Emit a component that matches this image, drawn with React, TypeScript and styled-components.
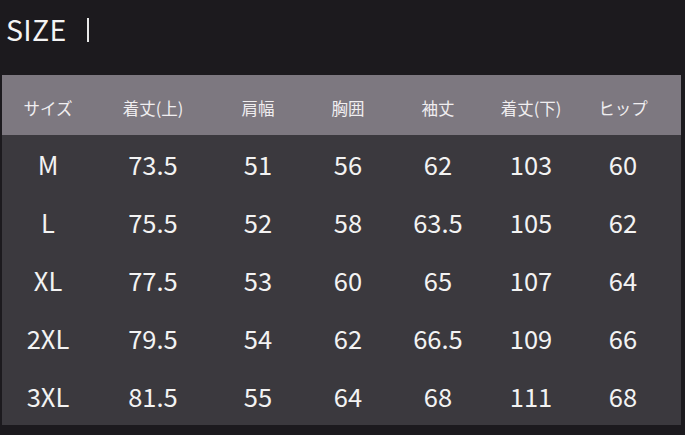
import React from 'react';
import styled, { createGlobalStyle } from 'styled-components';

const GlobalStyle = createGlobalStyle`
  html, body {
    margin: 0;
    padding: 0;
    background: #1c1a1e;
  }
  body {
    font-family: "Noto Sans CJK JP", "Noto Sans", sans-serif;
    color: #f2f2f2;
  }
`;

const Page = styled.div`
  width: 685px;
  height: 435px;
  background: #1c1a1e;
  overflow: hidden;
`;

const Title = styled.div`
  height: 75px;
  display: flex;
  align-items: center;
  padding: 0 0 17px 6px;
  box-sizing: border-box;
  font-size: 28.5px;
  line-height: 1;
  color: #f4f4f4;
  letter-spacing: 0.3px;
`;

const Bar = styled.span`
  display: inline-block;
  width: 2.5px;
  height: 24px;
  margin-left: 20px;
  margin-top: 2px;
  background: #e8e8e8;
`;

const Table = styled.div`
  margin-left: 2px;
  width: 679px;
`;

const cols = '92px 118px 92px 88px 92px 94px 90px 13px';

const HeaderRow = styled.div`
  display: grid;
  grid-template-columns: ${cols};
  height: 60px;
  align-items: center;
  background: #7d7880;
`;

const HeaderCell = styled.div`
  text-align: center;
  font-size: 16.5px;
  color: #f0eef0;
  padding-top: 5px;
`;

const Body = styled.div`
  background: #3b393e;
`;

const Row = styled.div`
  display: grid;
  grid-template-columns: ${cols};
  height: 58px;
  align-items: center;
`;

const Cell = styled.div`
  text-align: center;
  font-size: 25.5px;
  color: #f3f3f3;
  padding-bottom: 2px;
`;

const headers = ['サイズ', '着丈(上)', '肩幅', '胸囲', '袖丈', '着丈(下)', 'ヒップ'];

const rows: string[][] = [
  ['M', '73.5', '51', '56', '62', '103', '60'],
  ['L', '75.5', '52', '58', '63.5', '105', '62'],
  ['XL', '77.5', '53', '60', '65', '107', '64'],
  ['2XL', '79.5', '54', '62', '66.5', '109', '66'],
  ['3XL', '81.5', '55', '64', '68', '111', '68'],
];

export default function App() {
  return (
    <Page>
      <GlobalStyle />
      <Title>
        SIZE
        <Bar />
      </Title>
      <Table>
        <HeaderRow>
          {headers.map((h) => (
            <HeaderCell key={h}>{h}</HeaderCell>
          ))}
          <div />
        </HeaderRow>
        <Body>
          {rows.map((r) => (
            <Row key={r[0]}>
              {r.map((v, i) => (
                <Cell key={i}>{v}</Cell>
              ))}
              <div />
            </Row>
          ))}
        </Body>
      </Table>
    </Page>
  );
}
